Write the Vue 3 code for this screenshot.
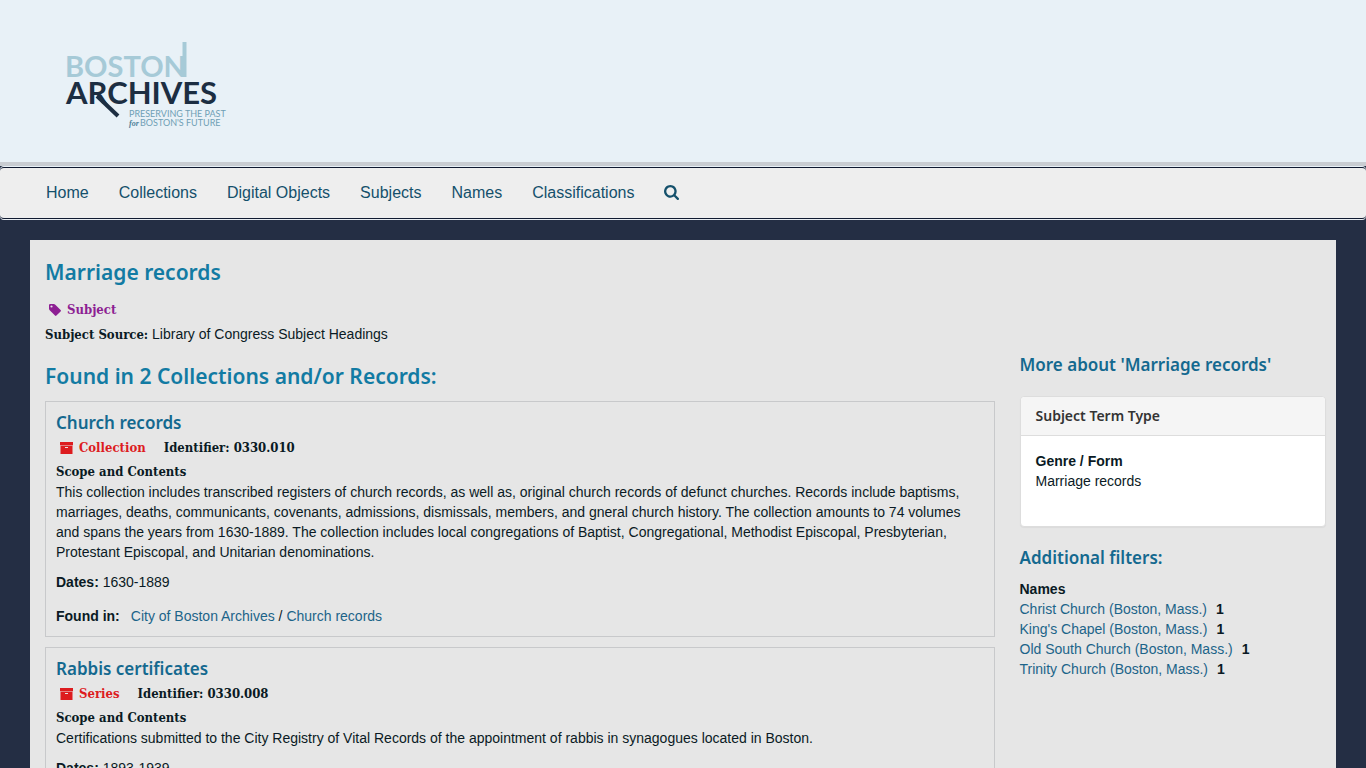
<template>
  <header class="site-header">
    <a href="#" class="logo-link" aria-label="Boston Archives">
      <svg class="logo" width="160" height="90" viewBox="0 0 160 90">
        <text class="logo-boston" x="-1" y="37" font-size="29">BOSTON</text>
        <path d="M118.500 2V37" stroke="#a6cad7" stroke-width="4" />
        <text class="logo-archives" x="0" y="64" font-size="31">ARCHIVES</text>
        <path d="M31 56L52 76" stroke="#1c2e42" stroke-width="4" />
        <text class="logo-tagline" x="63" y="77" font-size="9">PRESERVING THE PAST</text>
        <text class="logo-for" x="63" y="86" font-size="8">for</text>
        <text class="logo-tagline" x="74" y="86" font-size="9">BOSTON'S FUTURE</text>
      </svg>
    </a>
  </header>

  <nav class="navbar">
    <ul>
      <li v-for="item in navItems" :key="item">
        <a href="#">{{ item }}</a>
      </li>
      <li>
        <a href="#" aria-label="Search">
          <svg class="icon-search" width="15" height="15" viewBox="0 0 1664 1664">
            <path
              fill="currentColor"
              d="M1152 704q0-185-131.500-316.500T704 256 387.500 387.500 256 704t131.500 316.500T704 1152t316.500-131.500T1152 704zm512 832q0 52-38 90t-90 38q-54 0-90-38l-343-342q-179 124-399 124-143 0-273.500-55.500t-225-150-150-225T0 704t55.500-273.500 150-225 225-150T704 0t273.500 55.500 225 150 150 225T1408 704q0 220-124 399l343 343q37 37 37 90z"
            />
          </svg>
        </a>
      </li>
    </ul>
  </nav>

  <main class="content">
    <h1>Marriage records</h1>
    <div class="badge-line">
      <span class="badge subject">
        <svg width="12" height="12" viewBox="0 0 12 12">
          <path
            fill="currentColor"
            fill-rule="evenodd"
            d="M0 1.200Q0 0 1.200 0H4.800Q5.600 0 6.300.7L11.600 6Q12.300 6.700 11.600 7.400L7.400 11.600Q6.700 12.300 6 11.600L.7 6.300Q0 5.600 0 4.800ZM2.500 1.400A1.100 1.100 0 1 0 2.500 3.600 1.100 1.100 0 1 0 2.500 1.400Z"
          />
        </svg>
        Subject
      </span>
    </div>
    <div class="source"><strong>Subject Source:</strong> Library of Congress Subject Headings</div>

    <div class="columns">
      <section class="results">
        <h2>Found in 2 Collections and/or Records:</h2>
        <article v-for="record in records" :key="record.identifier" class="record">
          <h3><a href="#">{{ record.title }}</a></h3>
          <div class="badge-line">
            <span class="badge archival">
              <svg width="13" height="12" viewBox="0 0 13 12">
                <path
                  fill="currentColor"
                  fill-rule="evenodd"
                  d="M0 0H13V3.200H0ZM.5 3.700H12.500V12H.5ZM5 5V5.900H8V5Z"
                />
              </svg>
              {{ record.level }}
            </span>
            <span class="identifier">Identifier: {{ record.identifier }}</span>
          </div>
          <div class="scope-label">Scope and Contents</div>
          <p>{{ record.scope }}</p>
          <div class="dates"><strong>Dates:</strong> {{ record.dates }}</div>
          <div class="found-in">
            <strong>Found in:</strong>
            <span><a href="#">City of Boston Archives</a> / <a href="#">{{ record.title }}</a></span>
          </div>
        </article>
      </section>

      <aside class="sidebar">
        <h3>More about 'Marriage records'</h3>
        <div class="panel">
          <h4>Subject Term Type</h4>
          <dl>
            <dt>Genre / Form</dt>
            <dd>Marriage records</dd>
          </dl>
        </div>
        <h3>Additional filters:</h3>
        <dl class="filters">
          <dt>Names</dt>
          <dd v-for="name in names" :key="name">
            <a href="#">{{ name }}</a>
            <span class="count">1</span>
          </dd>
        </dl>
      </aside>
    </div>
  </main>
</template>

<script setup>
const navItems = ['Home', 'Collections', 'Digital Objects', 'Subjects', 'Names', 'Classifications']

const records = [
  {
    title: 'Church records',
    level: 'Collection',
    identifier: '0330.010',
    scope:
      'This collection includes transcribed registers of church records, as well as, original church records of defunct churches. Records include baptisms, marriages, deaths, communicants, covenants, admissions, dismissals, members, and gneral church history. The collection amounts to 74 volumes and spans the years from 1630-1889. The collection includes local congregations of Baptist, Congregational, Methodist Episcopal, Presbyterian, Protestant Episcopal, and Unitarian denominations.',
    dates: '1630-1889',
  },
  {
    title: 'Rabbis certificates',
    level: 'Series',
    identifier: '0330.008',
    scope:
      'Certifications submitted to the City Registry of Vital Records of the appointment of rabbis in synagogues located in Boston.',
    dates: '1893-1939',
  },
]

const names = [
  'Christ Church (Boston, Mass.)',
  "King's Chapel (Boston, Mass.)",
  'Old South Church (Boston, Mass.)',
  'Trinity Church (Boston, Mass.)',
]
</script>

<style>
body {
  margin: 0;
  background: #242e44;
  color: #0a1a24;
  font: 14px/20px 'Liberation Sans', Arial, sans-serif;
}
</style>

<style scoped>
* {
  box-sizing: border-box;
}

a {
  color: #1c6489;
  text-decoration: none;
}

h1,
h2,
h3,
h4,
p,
dl,
dd {
  margin: 0;
}

h1,
h2,
h3,
h4 {
  font-family: 'Noto Sans', sans-serif;
  font-weight: 600;
}

.site-header {
  padding: 40px 66px 32px;
  background: #e8f1f7;
  border-bottom: 4px solid #c9cdd2;
}

.logo-link,
.logo {
  display: block;
}

.logo-link {
  width: 160px;
}

.logo {
  overflow: visible;
}

.logo text {
  font-family: Lato, sans-serif;
}

.logo-boston {
  fill: #a6cad7;
  font-weight: 700;
}

.logo-archives {
  fill: #1c2e42;
  font-weight: 700;
}

.logo-tagline {
  fill: #6f9fb5;
}

.logo .logo-for {
  fill: #4e8199;
  font-family: 'Liberation Serif', serif;
  font-style: italic;
  font-weight: 700;
}

.navbar {
  margin-top: 1px;
  background: #eee;
  border: 1px solid #101a30;
  border-width: 1px 0;
  border-radius: 4px;
  box-shadow: 0 -1px #e8f1f7, 0 1px #e8edf2;
}

.navbar ul {
  display: flex;
  margin: 0;
  padding: 0 31px;
  list-style: none;
}

.navbar a {
  display: block;
  padding: 15px;
  color: #14506b;
  font-size: 16px;
}

.icon-search {
  display: block;
  margin-top: 2px;
}

.content {
  margin: 21px 30px 0;
  padding: 19px 15px;
  background: #e6e6e6;
}

h1,
h2 {
  color: #127ba3;
  font-size: 21px;
  line-height: 26px;
}

h1 {
  margin-bottom: 13px;
}

h2 {
  margin: 16px 0 12px;
}

h3 {
  color: #14698f;
  font-size: 17px;
  line-height: 22px;
}

h3 a {
  color: #14698f;
}

.badge-line {
  display: flex;
  gap: 18px;
  line-height: 24px;
}

.badge,
.identifier,
.scope-label,
.source strong {
  font-family: 'DejaVu Serif Condensed', 'DejaVu Serif', serif;
  font-size: 13px;
  font-weight: 700;
}

.badge {
  display: flex;
  align-items: center;
  gap: 6px;
  padding-left: 4px;
}

.subject {
  color: #8d1f93;
}

.archival {
  color: #dd1c1f;
}

.source {
  line-height: 24px;
}

.columns {
  display: grid;
  grid-template-columns: 3fr 1fr;
  margin: 0 -15px;
}

.results {
  padding: 0 15px;
}

.record {
  margin-bottom: 10px;
  padding: 10px;
  border: 1px solid #c8c9cb;
}

.record h3 {
  margin-bottom: 2px;
}

.scope-label {
  margin-top: 2px;
}

.dates {
  margin: 10px 0 14px;
}

.found-in {
  display: flex;
  gap: 11px;
}

.sidebar {
  padding: 7px 10px 0;
}

.panel {
  margin: 20px 0;
  background: #fff;
  border: 1px solid #ddd;
  border-radius: 4px;
  box-shadow: 0 1px 1px rgba(0, 0, 0, 0.05);
}

.panel h4 {
  padding: 10px 15px;
  background: #f5f5f5;
  border-bottom: 1px solid #ddd;
  border-radius: 4px 4px 0 0;
  color: #333;
  font-size: 14px;
  line-height: 18px;
}

.panel dl {
  padding: 15px 15px 35px;
}

dt {
  font-weight: 700;
}

.filters {
  margin-top: 10px;
}

.filters dd {
  display: flex;
  gap: 9px;
}

.count {
  font-weight: 700;
}
</style>
